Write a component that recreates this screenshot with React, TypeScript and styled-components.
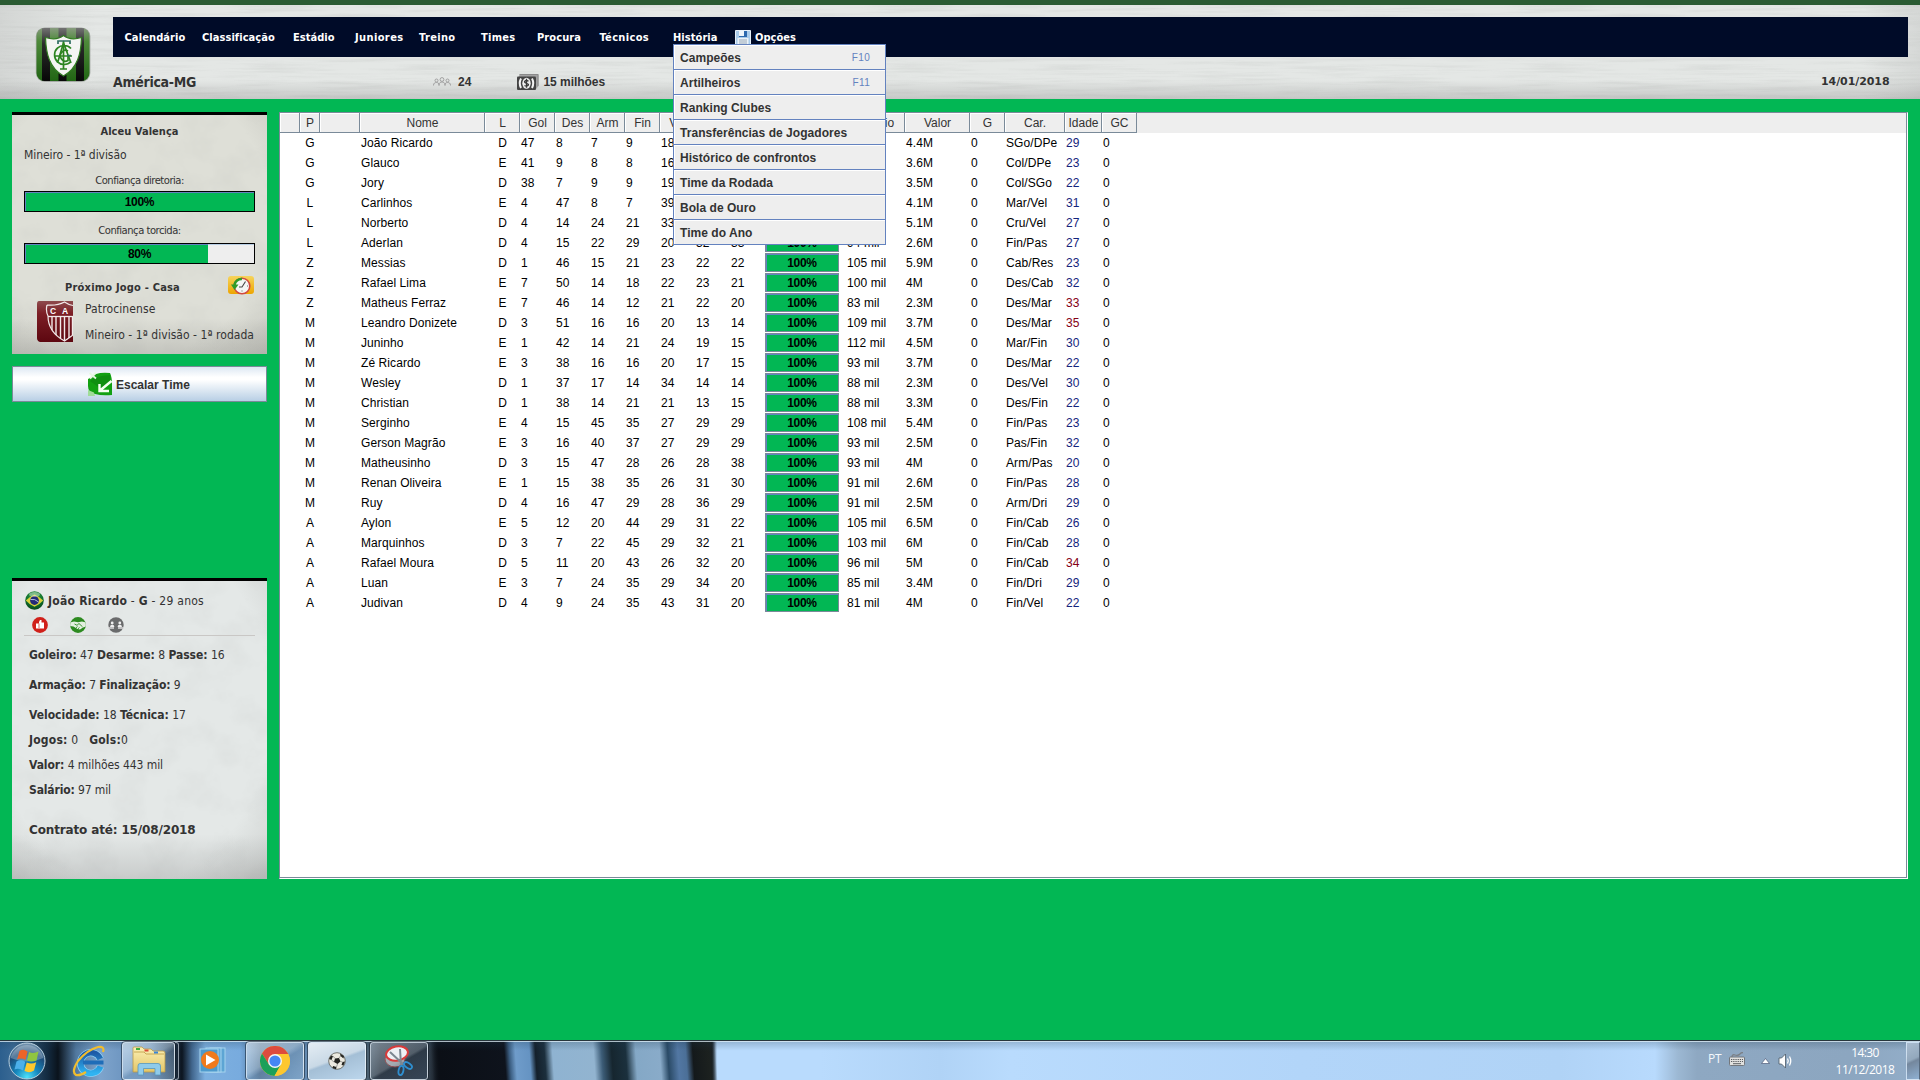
import React, { useLayoutEffect, useRef, useState } from 'react';
import styled, { createGlobalStyle } from 'styled-components';

const GREEN = '#02b754';
const TAHOMA = "'DejaVu Sans Condensed', 'DejaVu Sans', sans-serif";
const ARIAL = "'Liberation Sans', Arial, sans-serif";
const SEGOE = "'Open Sans', 'Noto Sans', sans-serif";

const grain = (fx: number, fy: number, strength: number, seed: number) =>
  `url("data:image/svg+xml,${encodeURIComponent(
    `<svg xmlns='http://www.w3.org/2000/svg' width='640' height='320'><filter id='n' x='0' y='0' width='100%' height='100%'><feTurbulence type='fractalNoise' baseFrequency='${fx} ${fy}' numOctaves='4' seed='${seed}' stitchTiles='stitch'/><feColorMatrix values='0 0 0 0 0.35  0 0 0 0 0.36  0 0 0 0 0.35  ${strength} 0 0 0 ${-strength * 0.42}'/></filter><rect width='640' height='320' filter='url(#n)'/></svg>`
  )}")`;

const Global = createGlobalStyle`
  * { box-sizing: border-box; }
  html, body { margin: 0; padding: 0; }
  body { background: ${GREEN}; overflow: hidden; font-family: ${ARIAL}; }
  svg { display: block; }
`;

const Screen = styled.div`
  width: 1920px;
  height: 1080px;
  display: flex;
  flex-direction: column;
  background: ${GREEN};
  overflow: hidden;
`;

/* ---------- text stretched to a known width through its tracking ---------- */
const TextLine = styled.span<{ $font?: string; $size?: number; $bold?: boolean; $color?: string }>`
  display: inline-block;
  justify-self: start;
  white-space: pre;
  font-family: ${p => p.$font ?? TAHOMA};
  font-size: ${p => p.$size ?? 12}px;
  font-weight: ${p => (p.$bold ? 700 : 400)};
  color: ${p => p.$color ?? '#333'};
  line-height: 16px;
`;

type FitProps = { w: number; font?: string; size?: number; bold?: boolean; color?: string; children: React.ReactNode };
function Fit({ w, font, size, bold, color, children }: FitProps) {
  const ref = useRef<HTMLSpanElement>(null);
  const [spacing, setSpacing] = useState(0);
  useLayoutEffect(() => {
    const el = ref.current;
    if (!el) return;
    el.style.letterSpacing = '0px';
    const natural = el.getBoundingClientRect().width;
    const s = (w - natural) / Math.max(1, (el.textContent ?? '').length);
    el.style.letterSpacing = `${s}px`;
    setSpacing(s);
  }, [w]);
  return (
    <TextLine ref={ref} $font={font} $size={size} $bold={bold} $color={color} style={{ letterSpacing: spacing }}>
      {children}
    </TextLine>
  );
}

/* ---------- header ---------- */
const Header = styled.header`
  height: 99px;
  flex: none;
  display: grid;
  grid-template-columns: 113px 1795px 12px;
  border-top: 5px solid #2b5b33;
  background-color: #e4e7e5;
  background-image: linear-gradient(180deg, transparent 80%, rgba(90, 90, 90, 0.22) 100%),
    linear-gradient(90deg, rgba(110, 110, 110, 0.14), transparent 5%, transparent 97%, rgba(110, 110, 110, 0.12)),
    ${grain(0.012, 0.3, 0.34, 4)};
`;
const Crest = styled.div`
  padding: 22px 0 0 35px;
`;
const HeaderMain = styled.div`
  display: flex;
  flex-direction: column;
  padding-top: 12px;
`;
const NavBar = styled.nav`
  position: relative;
  height: 40px;
  display: grid;
  grid-template-columns: 77.500px 91px 62px 64px 62px 56px 62.500px 73.500px 62px auto;
  justify-content: start;
  align-items: center;
  padding: 2px 0 0 11.500px;
  background: #000b28;
`;
const NavOption = styled.div`
  display: flex;
  align-items: center;
  gap: 4px;
`;
const InfoBar = styled.div`
  height: 42px;
  display: grid;
  grid-template-columns: 320px 84px 1304px auto;
  align-items: center;
  padding-top: 7px;
`;
const InfoItem = styled.div<{ $gap: number }>`
  display: flex;
  align-items: center;
  gap: ${p => p.$gap}px;
`;

/* ---------- dropdown ---------- */
const Menu = styled.ul`
  position: absolute;
  z-index: 5;
  left: 560px;
  top: 27px;
  width: 213px;
  margin: 0;
  padding: 0;
  list-style: none;
  border: 1px solid #6382bf;
  border-bottom: 0;
  background: #eee;
`;
const MenuItem = styled.li`
  height: 25px;
  display: flex;
  justify-content: space-between;
  align-items: center;
  padding: 1px 15px 0 6px;
  border-bottom: 1px solid #6382bf;
  box-shadow: inset 1px 1px 0 #fff;
  font: bold 12px/16px ${ARIAL};
  letter-spacing: 0.04px;
  color: #333;
`;
const Shortcut = styled.span`
  font: 10px/16px ${ARIAL};
  letter-spacing: 0.3px;
  color: #6382bf;
`;

/* ---------- body ---------- */
const Body = styled.main`
  flex: none;
  height: 941px;
  display: grid;
  grid-template-columns: 255px 1629px;
  column-gap: 12px;
  padding: 13px 12px 0;
  align-items: start;
`;
const Sidebar = styled.aside`
  display: flex;
  flex-direction: column;
`;
const Panel = styled.section<{ $tone: string; $height: number }>`
  height: ${p => p.$height}px;
  border-top: 3px solid #000;
  background-color: ${p => p.$tone};
  background-image: radial-gradient(ellipse 78% 85% at 47% 42%, transparent 70%, rgba(80, 80, 75, 0.26) 115%),
    linear-gradient(180deg, transparent 85%, rgba(90, 90, 90, 0.2)),
    ${grain(0.03, 0.035, 0.2, 9)};
`;
const ManagerPanel = styled(Panel)`
  padding: 9px 12px 0;
  display: flex;
  flex-direction: column;
`;
const Line = styled.div<{ $top?: number; $center?: boolean }>`
  display: flex;
  height: 16px;
  justify-content: ${p => (p.$center ? 'center' : 'flex-start')};
  margin-top: ${p => p.$top ?? 0}px;
`;
const Meter = styled.div<{ $top: number }>`
  display: grid;
  grid-template: 19px / 229px;
  height: 21px;
  margin-top: ${p => p.$top}px;
  border: 1px solid #000;
  background: #eee;
  box-shadow: inset 0 1px 0 #b8cfe5;
`;
const MeterFill = styled.div`
  grid-area: 1 / 1;
  background: ${GREEN};
  border-top: 1px solid #6382bf;
  border-left: 1px solid #6382bf;
`;
const MeterText = styled.div`
  grid-area: 1 / 1;
  padding-top: 1px;
  text-align: center;
  font: bold 12px/18px ${ARIAL};
  letter-spacing: -0.3px;
  color: #000;
`;
const NextGame = styled.div`
  display: grid;
  grid-template-columns: 163px 1fr;
  align-items: start;
  margin-top: 11px;
  height: 20px;
  padding-left: 41px;
`;
const NextTitle = styled.div`
  display: flex;
  padding-top: 5px;
`;
const Opponent = styled.div`
  display: grid;
  grid-template-columns: 36px 1fr;
  column-gap: 12px;
  padding-left: 13px;
  margin-top: 6px;
`;
const OpponentText = styled.div`
  display: flex;
  flex-direction: column;
  align-items: flex-start;
  gap: 10px;
`;
const LineupButton = styled.button`
  height: 36px;
  margin: 12px 0 176px;
  padding: 0 0 0 75px;
  display: flex;
  align-items: center;
  gap: 4px;
  border: 1px solid #7a8a99;
  border-radius: 0;
  background: linear-gradient(180deg, #dde8f3 0%, #fff 30%, #fff 38%, #b8cfe5 100%);
`;
const LineupLabel = styled.span`
  padding-top: 1px;
  font: bold 12px/16px ${ARIAL};
  color: #333;
`;
const PlayerPanel = styled(Panel)`
  padding: 10px 12px 0;
`;
const PlayerHead = styled.div`
  display: flex;
  align-items: center;
  gap: 4px;
  height: 19px;
  padding-left: 1px;
`;
const Badges = styled.div`
  display: flex;
  gap: 22px;
  height: 26px;
  padding: 7px 0 0 8px;
  border-bottom: 1px solid #c9c7c5;
`;
const Stats = styled.div`
  padding-left: 5px;
`;

/* ---------- squad table ---------- */
const TablePanel = styled.section`
  height: 767px;
  border: 1px solid;
  border-color: #7a8a99 #fff #fff #7a8a99;
  box-shadow: inset -1px -1px 0 #7a8a99;
  background: #fff;
`;
const COLS = '20px 20px 40px 125px 35px 35px 35px 35px 35px 35px 35px 35px 81px 59px 65px 35px 60px 37px 35px';
const HeadRow = styled.div`
  display: grid;
  grid-template-columns: ${COLS};
  height: 20px;
  margin-right: 1px;
  background: #eee;
`;
const HeadCell = styled.div`
  height: 20px;
  padding: 2px 0 0 1px;
  border-right: 1px solid #7a8a99;
  border-bottom: 1px solid #7a8a99;
  box-shadow: inset 1px 1px 0 #fff;
  font: 12px/17px ${ARIAL};
  color: #333;
  text-align: center;
  white-space: nowrap;
`;
const Row = styled.div`
  display: grid;
  grid-template-columns: ${COLS};
  height: 20px;
`;
const Cell = styled.div<{ $center?: boolean; $color?: string }>`
  padding-left: ${p => (p.$center ? 0 : 1)}px;
  text-align: ${p => (p.$center ? 'center' : 'left')};
  font: 12px/20px ${ARIAL};
  letter-spacing: 0.08px;
  color: ${p => p.$color ?? '#000'};
  white-space: nowrap;
`;
const Energy = styled.div`
  width: 74px;
  height: 19px;
  border: 1px solid #7a8a99;
  box-shadow: inset 1px 1px 0 #6382bf;
  background: ${GREEN};
  font: bold 12px/18px ${ARIAL};
  letter-spacing: -0.3px;
  text-align: center;
  color: #000;
`;

/* ---------- taskbar ---------- */
const Taskbar = styled.footer`
  height: 40px;
  flex: none;
  display: flex;
  justify-content: space-between;
  border-top: 1px solid #27363c;
  box-shadow: inset 0 1px 0 rgba(225, 240, 250, 0.75);
  background:
    linear-gradient(180deg, rgba(30, 60, 80, 0.25), transparent 25%),
    linear-gradient(86deg, transparent 432px, #0b0f16 440px, #0e131c 505px, #3c5f83 510px, #6f9cca 516px, #6593c2 530px, #14202b 536px, #1c2f3d 545px, #8fb3d1 553px, #92b4d0 594px, #3c5c77 602px, #16262f 612px, #1b303d 626px, #84a8c6 636px, #89abc9 660px, #2a4a66 668px, #5277a3 678px, #4b6f97 686px, #14191b 693px, #1c211f 709px, transparent 716px),
    linear-gradient(90deg, #2c5f8e 0, #3a6a95 14px, #132a3f 48px, #0a131c 58px, #51789f 76px, #7ea4cc 100px, #5c86b4 150px, #0c1520 182px, #41668d 192px, #7db0e0 205px, #78abde 240px, #48698c 260px, #5a83ad 290px, #7396b8 330px, #4e6678 365px, #37434f 380px, #33404d 428px, #0b0f16 440px, #16202a 712px, #b9dbfd 717px, #b9dbfd 820px, #b0d3f6 940px, #b9dbfd 1010px, #b2d5f9 1300px, #b0d3f6 1560px, #b8dafd 1655px, #9cb8d3 1678px, #8ea8c2 1697px, #8ca6c0 1850px, #93aec9 1920px);
`;
const Tasks = styled.div`
  display: flex;
  align-items: flex-start;
  padding-top: 1px;
`;
const Task = styled.div<{ $w: number; $gap?: number; $look?: 'open' | 'active' | 'dim' }>`
  width: ${p => p.$w}px;
  height: 38px;
  margin-left: ${p => p.$gap ?? 0}px;
  display: flex;
  align-items: center;
  justify-content: center;
  ${p =>
    p.$look
      ? `border: 1px solid rgba(230,240,250,.75); border-radius: 3px; outline: 1px solid rgba(10,20,30,.5);
         background: ${
           p.$look === 'active'
             ? 'linear-gradient(160deg, #e4edf4 0, #c9d9e6 45%, #a4bfd6 50%, #bcd6ec 100%)'
             : p.$look === 'open'
             ? 'linear-gradient(150deg, rgba(235,245,252,.62) 0, rgba(210,228,240,.45) 45%, rgba(140,170,195,.35) 55%, rgba(170,205,235,.4) 100%)'
             : 'linear-gradient(150deg, rgba(200,210,220,.45) 0, rgba(140,150,160,.35) 50%, rgba(40,52,66,.45) 55%, rgba(60,80,105,.35) 100%)'
         };`
      : ''}
`;
const StackEdge = styled.div`
  width: 4px;
  height: 38px;
  border: 1px solid rgba(225, 235, 245, 0.6);
  border-left: 0;
  border-radius: 0 3px 3px 0;
`;
const Tray = styled.div`
  display: grid;
  grid-template-columns: 21px 32px 17px 57px 71px 14px;
  align-items: center;
`;
const Raised = styled.div<{ $by: number }>`
  padding-bottom: ${p => p.$by}px;
`;
const Clock = styled.div`
  display: flex;
  flex-direction: column;
  align-items: center;
  width: 60px;
  gap: 1px;
  padding-top: 1px;
`;
const ShowDesktop = styled.div`
  height: 38px;
  margin-top: 1px;
  border: 1px solid rgba(225, 240, 255, 0.75);
  border-right-color: #56687c;
  background: linear-gradient(155deg, #a9bccf 0, #93a8bd 45%, #74879d 52%, #8fb0d2 100%);
`;

/* ---------- drawings ---------- */
const ClubCrest = () => (
  <svg width="56" height="56" viewBox="0 0 56 56">
    <defs>
      <linearGradient id="cg" x1="0" y1="0" x2="0" y2="1">
        <stop offset="0" stopColor="#8c9c84" /><stop offset=".25" stopColor="#4e8a3a" /><stop offset="1" stopColor="#1f6312" />
      </linearGradient>
      <linearGradient id="cb" x1="0" y1="0" x2="0" y2="1">
        <stop offset="0" stopColor="#777" /><stop offset=".3" stopColor="#2a2d2a" /><stop offset="1" stopColor="#050505" />
      </linearGradient>
      <clipPath id="cc"><rect x="1.500" y="1" width="53" height="53" rx="8" /></clipPath>
    </defs>
    <rect x="0.8" y="0.4" width="54.600" height="54.600" rx="9" fill="#a6aaa6" />
    <g clipPath="url(#cc)">
      <rect width="56" height="56" fill="url(#cg)" />
      {[7, 23.5, 41].map(x => <rect key={x} x={x} y="0" width="8" height="56" fill="url(#cb)" />)}
    </g>
    <path d="M28.500 8.500C24 12 17 12.500 10.500 10.500C11 26 14 41 28.500 49C43 41 46 26 46.500 10.500C40 12.500 33 12 28.500 8.500Z" fill="#f4f5f2" stroke="#2f7a1f" strokeWidth="1.200" />
    <g fill="none" stroke="#2c8420" strokeWidth="1.700">
      <path d="M36 21.500a9.500 9.500 0 1 0 0 13M22.500 36L28.500 16L36 36M20.500 29H37" />
      <path d="M33 24a5 5.500 0 1 0 0 9.500v-4M28.500 14v28M25 42h7" />
      <path d="M23 17v-3h12v3M36 28.500h-4" stroke="#2f6e62" />
    </g>
  </svg>
);
const People = () => (
  <svg width="18" height="9" viewBox="0 0 18 9" fill="none" stroke="#a0a0a0" strokeWidth="1">
    <circle cx="3.500" cy="3.500" r="1.500" /><path d="M.5 8.500C.5 6 2 5.500 3.500 5.500S6 6 6 8.500" />
    <circle cx="9" cy="2.500" r="1.900" /><path d="M6 8.500C6 5.500 7.500 5 9 5s3 .5 3 3.500" />
    <circle cx="14.500" cy="3.500" r="1.500" /><path d="M12 8.500C12 6 13 5.500 14.500 5.500s3 .5 3 3" />
  </svg>
);
const Money = () => (
  <svg width="22" height="16" viewBox="0 0 22 16">
    <path d="M2 2L3 0H21.500V12L19 15V3H2Z" fill="#a2a2a2" /><path d="M2.500 .5H21V12" fill="none" stroke="#8a8a8a" />
    <rect x="0" y="2.500" width="19" height="13.500" rx="1" fill="#444" />
    <path d="M4 4.500Q1.500 9.300 4 14M15 4.500Q17.500 9.300 15 14" stroke="#f2f2f2" strokeWidth="2" fill="none" />
    <ellipse cx="9.500" cy="9.300" rx="4.200" ry="5.500" fill="#eee" />
    <path d="M11.500 7.300Q9.500 5.800 8 7T9.500 9.300T11 11.600Q9.500 12.800 7.500 11.500M9.500 4.800v9" stroke="#3a3a3a" strokeWidth="1.300" fill="none" />
  </svg>
);
const Floppy = () => (
  <svg width="16" height="16" viewBox="0 0 16 16">
    <path d="M.5.5H15.500V15.500H2L.5 14Z" fill="#a9cbea" stroke="#e6f0f9" />
    <rect x="4" y="1" width="8" height="6" fill="#2d69ae" /><rect x="4" y="1" width="5" height="5" fill="#eef5fb" />
    <rect x="2.500" y="8" width="11" height="7" fill="#eaf1f7" /><path d="M4 10h8M4 12h8M4 14h8" stroke="#9aa9b8" />
  </svg>
);
const History = () => (
  <svg width="26" height="20" viewBox="0 0 26 20">
    <defs><linearGradient id="hy" x1="0" y1="0" x2="0" y2="1"><stop offset="0" stopColor="#f6d45c" /><stop offset="1" stopColor="#eda500" /></linearGradient></defs>
    <rect x="0" y="1" width="26" height="18" rx="3" fill="url(#hy)" />
    <circle cx="14" cy="11" r="7.800" fill="#f4f6f4" stroke="#d2493f" strokeWidth="1.600" />
    <path d="M14 4A7 7 0 0 0 6.500 10" fill="none" stroke="#2f9b2a" strokeWidth="2.600" /><path d="M3 9.500H10.500L6.500 15Z" fill="#2f9b2a" />
    <path d="M17.500 6.500L14 12H11" stroke="#444" strokeWidth="1.100" fill="none" />
    <path d="M14 15.500v1M19 11h1" stroke="#666" />
  </svg>
);
const RivalCrest = () => (
  <svg width="36" height="41" viewBox="0 0 36 41">
    <defs><linearGradient id="rr" x1="0" y1="0" x2="0" y2="1"><stop offset="0" stopColor="#8e4b4d" /><stop offset=".3" stopColor="#7c1f26" /><stop offset="1" stopColor="#5d0710" /></linearGradient></defs>
    <path d="M2 0H36V41H3Q0 40 0 37V3Q0 0 2 0Z" fill="url(#rr)" />
    <path d="M10 4Q20 5 27.500 1Q32 4 36 4.500M10 4Q8.500 10 11 15Q11 31 27.500 40L36 34" fill="none" stroke="#f1e9e9" strokeWidth="1.200" />
    <path d="M11 15.500H36" stroke="#f1e9e9" strokeWidth="1.300" />
    <path d="M15 16V29M19 16V34M23.500 16V37M27.500 16V40M32 16V37M35.500 16V34" stroke="#f1e9e9" strokeWidth="1.400" />
    <text x="13" y="12.500" fontFamily={ARIAL} fontWeight="bold" fontSize="8.500" fill="#fff">C</text>
    <text x="25" y="12.500" fontFamily={ARIAL} fontWeight="bold" fontSize="8.500" fill="#fff">A</text>
  </svg>
);
const Tactics = () => (
  <svg width="24" height="24" viewBox="0 0 24 24">
    <path d="M0 7Q5 5 8 2Q14 0 22 1Q24 5 24 12V23Q14 24 7 22Q0 21 0 14Z" fill="#12a012" />
    <path d="M2 9Q8 4 22 3V9L13 17Z" fill="#0b7d10" opacity=".5" />
    <path d="M1.500 1L8 6.500M8 .5L2 6.500" stroke="#e6f7e2" strokeWidth="1.800" />
    <path d="M23.500 9L12 18.500M11.500 12V19H21" stroke="#f4fff2" strokeWidth="2.400" fill="none" />
    <path d="M0 18L6 20.500L7 24H0Z" fill="#9fdc98" />
  </svg>
);
const Brazil = () => (
  <svg width="19" height="19" viewBox="0 0 19 19">
    <defs><radialGradient id="bz" cx=".5" cy=".3" r=".75"><stop offset="0" stopColor="#3ba54a" /><stop offset=".6" stopColor="#10702c" /><stop offset="1" stopColor="#053b16" /></radialGradient></defs>
    <circle cx="9.500" cy="9.500" r="9.300" fill="url(#bz)" /><path d="M.8 9.500Q5 5.500 9.500 3.500Q14 5.500 18.200 9.500Q14 14 9.500 15.800Q5 14 .8 9.500Z" fill="#d8cf3a" />
    <circle cx="9.500" cy="9.500" r="4.400" fill="#232a78" /><path d="M5.500 8.500Q10 7.500 13.500 11" stroke="#b8bfe0" fill="none" />
    <ellipse cx="9.500" cy="3.500" rx="5.500" ry="2.500" fill="#fff" opacity=".4" />
  </svg>
);
const ThumbBadge = () => (
  <svg width="16" height="16" viewBox="0 0 16 16"><circle cx="8" cy="8" r="7.900" fill="#d0201a" />
    <path d="M4 6.500H7V5L8 3H9.500V5.500H12V11.500H4Z" fill="#fff" /><path d="M7 6.500V11" stroke="#d0201a" strokeWidth=".7" /></svg>
);
const HandshakeBadge = () => (
  <svg width="16" height="16" viewBox="0 0 16 16">
    <clipPath id="hb"><circle cx="8" cy="8" r="7.900" /></clipPath>
    <g clipPath="url(#hb)">
      <rect width="16" height="16" fill="#2d8a20" />
      <path d="M0 5.500L4 4.500L8 5.200L12 4.500L16 5.500V9.500L13 10.500L10 12.500L7.500 12L3.500 9.500L0 9Z" fill="#e3efe0" />
      <path d="M4.500 7L7 8.300L9 6.500L12.500 9.800M6 10.800l1.500-1.300M8 11.800l1.500-1.300" stroke="#2d8a20" fill="none" strokeWidth=".9" />
    </g>
  </svg>
);
const SwapBadge = () => (
  <svg width="16" height="16" viewBox="0 0 16 16"><circle cx="8" cy="8" r="7.700" fill="#6a6b6c" />
    <circle cx="4.200" cy="6" r="1.400" fill="#eee" /><circle cx="11.800" cy="6" r="1.400" fill="#eee" />
    <path d="M2 10Q2 7.800 4.200 7.800T6.400 10ZM9.600 10Q9.600 7.800 11.800 7.800T14 10Z" fill="#eee" /><path d="M0 11H6M10 11H16" stroke="#ddd" strokeWidth="1.500" /></svg>
);
const StartOrb = () => (
  <svg width="38" height="38" viewBox="0 0 38 38">
    <defs><radialGradient id="so" cx=".5" cy=".95" r=".95"><stop offset="0" stopColor="#4ee2fa" /><stop offset=".35" stopColor="#1586bd" /><stop offset=".7" stopColor="#1d4b78" /><stop offset="1" stopColor="#7c9bb4" /></radialGradient></defs>
    <circle cx="19" cy="19" r="18" fill="url(#so)" stroke="#b8cfdd" strokeWidth="1" />
    <path d="M2.500 16A17 17 0 0 1 35.500 16Q19 23 2.500 16Z" fill="#fff" opacity=".26" />
    <path d="M11.500 9Q15.500 6.500 19.500 9.500L17.500 18Q13.500 15.500 9 17.500Z" fill="#ec6428" />
    <path d="M21 10Q25.500 12 30.500 9.500L28.500 18.500Q23.500 20.500 19 18.500Z" fill="#90c540" />
    <path d="M8.500 19.500Q13 17 17.200 19.800L15 28.500Q11 25.800 6.500 27.500Z" fill="#4bb0ea" />
    <path d="M18.700 20.500Q23.500 22.500 28.200 20.200L26 28.500Q21.500 31.500 16.500 29Z" fill="#fdc82e" />
  </svg>
);
const Browser = () => (
  <svg width="34" height="32" viewBox="0 0 34 32">
    <defs><linearGradient id="ie" x1="0" y1="0" x2="0" y2="1"><stop offset="0" stopColor="#1d5aa6" /><stop offset="1" stopColor="#2fb4f2" /></linearGradient></defs>
    <path d="M28.500 21.500A10.300 10.300 0 1 1 28.300 14" fill="none" stroke="#8fd0f4" strokeWidth="7.200" />
    <path d="M28.500 21.500A10.300 10.300 0 1 1 28.300 14" fill="none" stroke="url(#ie)" strokeWidth="5.800" />
    <path d="M11 15.500H31.500V19.500H11Z" fill="#1f6db8" />
    <path d="M31 7Q33 1 26 2Q15 5 6 16Q-1 27 4 30Q8 31 14 27" fill="none" stroke="#f0bd2e" strokeWidth="2.200" />
  </svg>
);
const Folder = () => (
  <svg width="34" height="30" viewBox="0 0 34 30">
    <defs><linearGradient id="fo" x1="0" y1="0" x2="0" y2="1"><stop offset="0" stopColor="#fbf0b6" /><stop offset="1" stopColor="#e3c667" /></linearGradient></defs>
    <path d="M1 2Q1 1 2 1H10L12 3H19L21 5H31Q33 5 33 7V26H1Z" fill="url(#fo)" stroke="#b99a4a" strokeWidth=".8" />
    <path d="M2 6H12L14 8H32" stroke="#c8aa55" fill="none" /><rect x="4" y="2" width="4" height="2" fill="#3fae3c" /><rect x="12.500" y="3.500" width="4" height="2" fill="#d94b34" /><rect x="22" y="5.500" width="4" height="2" fill="#3a86d6" />
    <path d="M6 29V20Q6 17.500 8 17.500H26Q28.500 17.500 28.500 20V29H23V22.500H11.500V29Z" fill="#8fcbea" stroke="#5597bf" strokeWidth=".8" />
  </svg>
);
const MediaPlayer = () => (
  <svg width="30" height="28" viewBox="0 0 30 28">
    <rect x="11" y="1" width="15" height="24" fill="#5da5d4" stroke="#a5d3ee" /><rect x="7" y="1" width="15" height="24" fill="#64acd9" stroke="#a5d3ee" />
    <rect x="1" y="2" width="18" height="23" fill="#4d9acc" stroke="#a5d3ee" />
    <circle cx="11" cy="13" r="9" fill="#f07a1c" /><path d="M7 7.500L16.500 13L7 18.500Z" fill="#fff" />
  </svg>
);
const Chrome = () => (
  <svg width="30" height="30" viewBox="0 0 30 30">
    <circle cx="15" cy="15" r="15" fill="#fdc72f" />
    <path d="M2 7.500A15 15 0 0 1 28 7.500L28.200 8H15L9 18.500Z" fill="#dd4b3e" /><path d="M2 7.500A15 15 0 0 0 14.500 30L21 18.500H9Z" fill="#1ba05a" />
    <path d="M15 8H28.200A15 15 0 0 1 14.500 30L21 18.500Z" fill="#fdc72f" />
    <circle cx="15" cy="15" r="7" fill="#f3f5f6" /><circle cx="15" cy="15" r="5.600" fill="#4486f4" />
  </svg>
);
const Ball = () => (
  <svg width="18" height="18" viewBox="0 0 18 18">
    <circle cx="9" cy="9" r="8.300" fill="#eceae0" stroke="#5a5a52" strokeWidth=".8" />
    <path d="M7 6.500L11 6L12.500 9.500L9.500 12L6 10ZM1 7L3 3.500L5 4L3.500 8ZM12 1.500L16 4L15.500 6.500L12.500 4ZM14.500 10L17 9.500L15.500 13.500L13.500 13ZM5 14L8.500 15L8 17.300L4.500 16Z" fill="#23231f" />
    <path d="M5 4L7 6.500M12.500 4L11 6M12.500 9.500L14.500 10M9.500 12L8.500 15M6 10L3.500 8" stroke="#666" strokeWidth=".6" />
  </svg>
);
const Scissors = () => (
  <svg width="30" height="32" viewBox="0 0 30 32">
    <ellipse cx="11" cy="14" rx="10" ry="8" fill="#cfd3d8" opacity=".65" stroke="#b04a4a" />
    <ellipse cx="13" cy="8.500" rx="11" ry="7" fill="#edf0f4" stroke="#d93a3a" strokeWidth="2" transform="rotate(-10 13 8.500)" />
    <path d="M6 7L20 20M16 4L17 20" stroke="#7c8791" strokeWidth="2" />
    <ellipse cx="24" cy="20.500" rx="4.500" ry="2.500" fill="none" stroke="#2f8fd0" strokeWidth="1.800" transform="rotate(35 24 20.500)" />
    <ellipse cx="17" cy="25.500" rx="2.400" ry="4.600" fill="none" stroke="#2f8fd0" strokeWidth="1.800" transform="rotate(12 17 25.500)" />
  </svg>
);
const Keyboard = () => (
  <svg width="16" height="14" viewBox="0 0 16 14"><path d="M3 5Q3 2 6 3T11 2Q12 .5 14 .5" stroke="#7c7f84" fill="none" strokeWidth="1.300" />
    <rect x=".5" y="5" width="15" height="8.500" rx="1" fill="#e1e1df" stroke="#73777c" /><path d="M2 7.500H14M2 9.500H14" stroke="#5c5f63" strokeDasharray="1.300 .9" /><path d="M4 11.700H12" stroke="#5c5f63" /></svg>
);
const Speaker = () => (
  <svg width="16" height="16" viewBox="0 0 16 16"><path d="M1 5H3.500L7.500 1V15L3.500 11H1Z" fill="#fff" stroke="#4c5a68" strokeWidth=".8" />
    <path d="M9.500 5.500Q11 8 9.500 10.500M11.500 3.500Q14 8 11.500 12.500" stroke="#fff" strokeWidth="1.300" fill="none" /></svg>
);

/* ---------- data ---------- */
const nav: [string, number][] = [
  ['Calendário', 61], ['Classificação', 72.5], ['Estádio', 41.5], ['Juniores', 48.5], ['Treino', 36.5],
  ['Times', 34.5], ['Procura', 44], ['Técnicos', 49.5], ['História', 44.5],
];
const menu: [string, string?][] = [
  ['Campeões', 'F10'], ['Artilheiros', 'F11'], ['Ranking Clubes'], ['Transferências de Jogadores'],
  ['Histórico de confrontos'], ['Time da Rodada'], ['Bola de Ouro'], ['Time do Ano'],
];
const heads = ['', 'P', '', 'Nome', 'L', 'Gol', 'Des', 'Arm', 'Fin', 'Vel', 'Tec', 'Pas', 'Energia', 'Salário', 'Valor', 'G', 'Car.', 'Idade', 'GC'];
const squad = `G|João Ricardo|D|47|8|7|9|18|17|16|97 mil|4.4M|SGo/DPe|29
G|Glauco|E|41|9|8|8|16|15|14|85 mil|3.6M|Col/DPe|23
G|Jory|D|38|7|9|9|19|14|15|82 mil|3.5M|Col/SGo|22
L|Carlinhos|E|4|47|8|7|39|20|21|100 mil|4.1M|Mar/Vel|31
L|Norberto|D|4|14|24|21|33|30|31|107 mil|5.1M|Cru/Vel|27
L|Aderlan|D|4|15|22|29|20|32|33|94 mil|2.6M|Fin/Pas|27
Z|Messias|D|1|46|15|21|23|22|22|105 mil|5.9M|Cab/Res|23
Z|Rafael Lima|E|7|50|14|18|22|23|21|100 mil|4M|Des/Cab|32
Z|Matheus Ferraz|E|7|46|14|12|21|22|20|83 mil|2.3M|Des/Mar|33
M|Leandro Donizete|D|3|51|16|16|20|13|14|109 mil|3.7M|Des/Mar|35
M|Juninho|E|1|42|14|21|24|19|15|112 mil|4.5M|Mar/Fin|30
M|Zé Ricardo|E|3|38|16|16|20|17|15|93 mil|3.7M|Des/Mar|22
M|Wesley|D|1|37|17|14|34|14|14|88 mil|2.3M|Des/Vel|30
M|Christian|D|1|38|14|21|21|13|15|88 mil|3.3M|Des/Fin|22
M|Serginho|E|4|15|45|35|27|29|29|108 mil|5.4M|Fin/Pas|23
M|Gerson Magrão|E|3|16|40|37|27|29|29|93 mil|2.5M|Pas/Fin|32
M|Matheusinho|D|3|15|47|28|26|28|38|93 mil|4M|Arm/Pas|20
M|Renan Oliveira|E|1|15|38|35|26|31|30|91 mil|2.6M|Fin/Pas|28
M|Ruy|D|4|16|47|29|28|36|29|91 mil|2.5M|Arm/Dri|29
A|Aylon|E|5|12|20|44|29|31|22|105 mil|6.5M|Fin/Cab|26
A|Marquinhos|D|3|7|22|45|29|32|21|103 mil|6M|Fin/Cab|28
A|Rafael Moura|D|5|11|20|43|26|32|20|96 mil|5M|Fin/Cab|34
A|Luan|E|3|7|24|35|29|34|20|85 mil|3.4M|Fin/Dri|29
A|Judivan|D|4|9|24|35|43|31|20|81 mil|4M|Fin/Vel|22`
  .split('\n')
  .map(r => r.split('|'));

export default function App() {
  return (
    <Screen>
      <Global />
      <Header>
        <Crest><ClubCrest /></Crest>
        <HeaderMain>
          <NavBar>
            {nav.map(([t, w]) => <Fit key={t} w={w} size={11} bold color="#fff">{t}</Fit>)}
            <NavOption><Floppy /><Fit w={41} size={11} bold color="#fff">Opções</Fit></NavOption>
            <Menu>
              {menu.map(([t, k]) => <MenuItem key={t}>{t}{k && <Shortcut>{k}</Shortcut>}</MenuItem>)}
            </Menu>
          </NavBar>
          <InfoBar>
            <Fit w={83} size={14} bold>América-MG</Fit>
            <InfoItem $gap={7}><People /><Fit w={13.5} font={ARIAL} bold>24</Fit></InfoItem>
            <InfoItem $gap={4.5}><Money /><Fit w={61.5} font={ARIAL} bold>15 milhões</Fit></InfoItem>
            <Fit w={68.5} size={11} bold font="'DejaVu Sans', sans-serif">14/01/2018</Fit>
          </InfoBar>
        </HeaderMain>
      </Header>

      <Body>
        <Sidebar>
          <ManagerPanel $tone="#dedfd7" $height={242}>
            <Line $center><Fit w={78} size={11} bold>Alceu Valença</Fit></Line>
            <Line $top={7}><Fit w={102.5}>Mineiro - 1ª divisão</Fit></Line>
            <Line $top={10} $center><Fit w={88.5} size={10} font="'DejaVu Sans', sans-serif">Confiança diretoria:</Fit></Line>
            <Meter $top={2}><MeterFill style={{ width: '100%' }} /><MeterText>100%</MeterText></Meter>
            <Line $top={11} $center><Fit w={82.5} size={10} font="'DejaVu Sans', sans-serif">Confiança torcida:</Fit></Line>
            <Meter $top={4}><MeterFill style={{ width: '80%' }} /><MeterText>80%</MeterText></Meter>
            <NextGame><NextTitle><Fit w={115} size={11} bold>Próximo Jogo - Casa</Fit></NextTitle><History /></NextGame>
            <Opponent>
              <RivalCrest />
              <OpponentText>
                <Fit w={70.5}>Patrocinense</Fit>
                <Fit w={169}>Mineiro - 1ª divisão - 1ª rodada</Fit>
              </OpponentText>
            </Opponent>
          </ManagerPanel>
          <LineupButton><Tactics /><LineupLabel>Escalar Time</LineupLabel></LineupButton>
          <PlayerPanel $tone="#e4e8e7" $height={301}>
            <PlayerHead><Brazil /><Fit w={156}><b>João Ricardo</b> - <b>G</b> - 29 anos</Fit></PlayerHead>
            <Badges><ThumbBadge /><HandshakeBadge /><SwapBadge /></Badges>
            <Stats>
              <Line $top={11}><Fit w={195.5}><b>Goleiro:</b> 47 <b>Desarme:</b> 8 <b>Passe:</b> 16</Fit></Line>
              <Line $top={14}><Fit w={151.5}><b>Armação:</b> 7 <b>Finalização:</b> 9</Fit></Line>
              <Line $top={14}><Fit w={157}><b>Velocidade:</b> 18 <b>Técnica:</b> 17</Fit></Line>
              <Line $top={9}><Fit w={99}><b>Jogos:</b> 0   <b>Gols:</b>0</Fit></Line>
              <Line $top={9}><Fit w={134}><b>Valor:</b> 4 milhões 443 mil</Fit></Line>
              <Line $top={9}><Fit w={82}><b>Salário:</b> 97 mil</Fit></Line>
              <Line $top={24}><Fit w={166.5} bold font="'DejaVu Sans', sans-serif">Contrato até: 15/08/2018</Fit></Line>
            </Stats>
          </PlayerPanel>
        </Sidebar>

        <TablePanel>
          <HeadRow>{heads.map((h, i) => <HeadCell key={i}>{h}</HeadCell>)}</HeadRow>
          {squad.map(([p, name, side, gol, des, arm, fin, vel, tec, pas, sal, val, car, age]) => (
            <Row key={name}>
              <Cell />
              <Cell $center>{p}</Cell>
              <Cell />
              <Cell>{name}</Cell>
              <Cell $center>{side}</Cell>
              {[gol, des, arm, fin, vel, tec, pas].map((v, i) => <Cell key={i}>{v}</Cell>)}
              <Energy>100%</Energy>
              <Cell>{sal}</Cell>
              <Cell>{val}</Cell>
              <Cell>0</Cell>
              <Cell>{car}</Cell>
              <Cell $color={Number(age) > 32 ? '#850014' : '#14247c'}>{age}</Cell>
              <Cell>0</Cell>
            </Row>
          ))}
        </TablePanel>
      </Body>

      <Taskbar>
        <Tasks>
          <Task $w={38} $gap={8}><StartOrb /></Task>
          <Task $w={34} $gap={26}><Browser /></Task>
          <Task $w={53} $gap={16} $look="open"><Folder /></Task>
          <StackEdge />
          <Task $w={30} $gap={20}><MediaPlayer /></Task>
          <Task $w={58} $gap={17} $look="open"><Chrome /></Task>
          <Task $w={58} $gap={4} $look="active"><Ball /></Task>
          <Task $w={58} $gap={4} $look="dim"><Scissors /></Task>
        </Tasks>
        <Tray>
          <Raised $by={5}><Fit w={13.5} size={12} font={SEGOE} color="#f4f8fc">PT</Fit></Raised>
          <Raised $by={4}><Keyboard /></Raised>
          <svg width="9" height="6" viewBox="0 0 9 6"><path d="M4.500 .5L8.500 5.500H.5Z" fill="#fff" stroke="#4c5a78" strokeWidth=".7" /></svg>
          <Speaker />
          <Clock>
            <Fit w={27.5} size={12} font={SEGOE} color="#fff">14:30</Fit>
            <Fit w={59} size={12} font={SEGOE} color="#fff">11/12/2018</Fit>
          </Clock>
          <ShowDesktop />
        </Tray>
      </Taskbar>
    </Screen>
  );
}
